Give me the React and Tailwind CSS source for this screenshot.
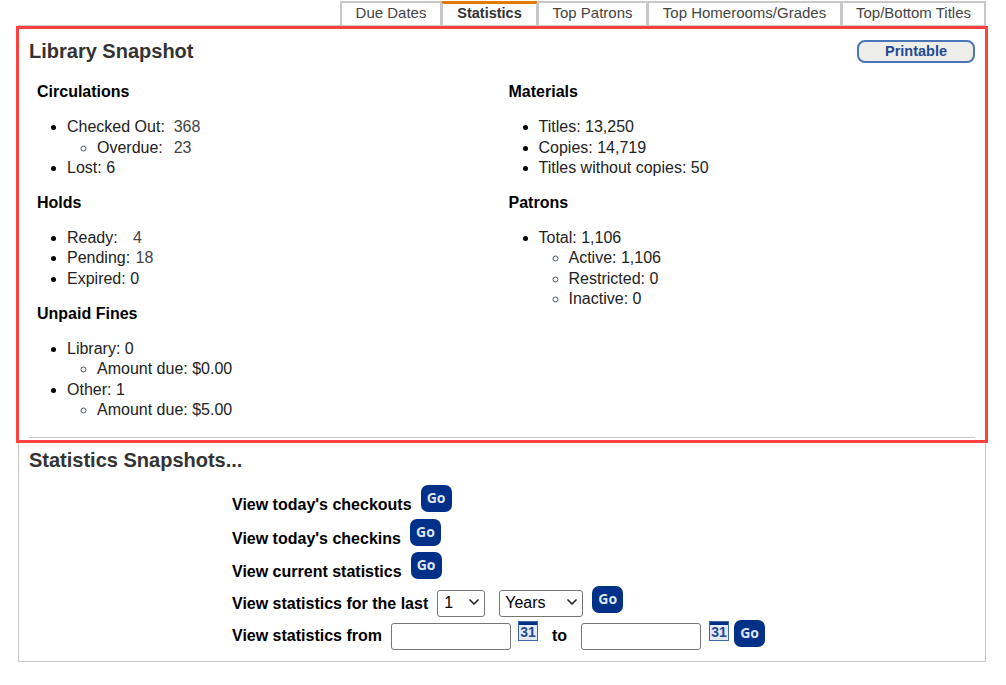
import React from "react";
import { ChevronDown } from "lucide-react";

const font = { fontFamily: '"Liberation Sans", Arial, sans-serif' };

const tabs = [
  { label: "Due Dates", w: "w-[102px]" },
  { label: "Statistics", w: "w-[97px]", active: true },
  { label: "Top Patrons", w: "w-[111px]" },
  { label: "Top Homerooms/Grades", w: "w-[195px]" },
  { label: "Top/Bottom Titles", w: "w-[145px]" },
];

const Section = ({ title, children }) => (
  <div className="mb-[14.55px]">
    <h3 className="mb-[14.55px] font-bold text-black">{title}</h3>
    <ul className="list-disc pl-[30px] marker:text-black">{children}</ul>
  </div>
);

const Sub = ({ children }) => (
  <ul className="list-[circle] pl-[30px] marker:text-gray-600">{children}</ul>
);

const Num = ({ className = "", children }) => <span className={`text-[#444] ${className}`}>{children}</span>;

const GoButton = ({ className = "" }) => (
  <button
    className={`flex h-[27px] w-[31px] items-center justify-center rounded-[7px] bg-[#003087] text-[14px] font-bold text-[#dfe6f2] ${className}`}
    style={{ fontFamily: '"Open Sans", sans-serif' }}
  >
    Go
  </button>
);

const CalendarIcon = ({ className = "" }) => (
  <div className={`flex h-[20px] w-[20px] flex-col overflow-hidden border border-[#3f66a8] bg-[#e3eaf6] ${className}`}>
    <div className="h-[3px] shrink-0 bg-[#003087]" />
    <div className="flex-1 text-center text-[14px] font-bold leading-[15px] text-[#1f4a92]">31</div>
  </div>
);

const fieldClass =
  "h-[27px] rounded-[3px] border border-[#767676] bg-white text-[16px] text-black";

const Select = ({ className = "", width, pad, value }) => (
  <div className={`relative ${className}`}>
    <select className={`h-[23px] appearance-none font-normal ${width} ${pad} ${fieldClass}`} defaultValue={value}>
      <option>{value}</option>
    </select>
    <ChevronDown size={16} strokeWidth={2.5} className="pointer-events-none absolute right-[3px] top-[4px] text-[#222]" />
  </div>
);

export default function App() {
  return (
    <div className="relative h-[685px] w-[1006px] overflow-hidden bg-white text-[16px] leading-[20.4px] text-[#222]" style={font}>
      <div className="flex h-[25px] justify-end pr-[20px] pt-[1px]">
        {tabs.map((t) => (
          <div
            key={t.label}
            className={`-ml-[1px] whitespace-nowrap border-2 border-b-0 border-[#c8c8c8] text-center leading-[19px] first:ml-0 ${t.w} ${
              t.active ? "border-t-[3px] border-t-[#e07b00] text-[14.5px] font-bold text-[#333]" : "text-[15px] text-[#444]"
            }`}
          >
            {t.label}
          </div>
        ))}
      </div>

      <div className="mx-[18px] h-[637px] w-[968px] border border-[#c8c8c8] pl-[10px] pr-[10px]">
        <div className="flex items-center justify-between pt-[13px]">
          <h2 className="text-[20px] font-bold leading-[25px] text-[#333]">Library Snapshot</h2>
          <button className="h-[23px] w-[118px] rounded-[8px] border-2 border-[#4a76b8] bg-[#edeee9] text-[14.5px] font-bold leading-[17px] text-[#1f4a92]">
            Printable
          </button>
        </div>

        <div className="flex pl-[8px] pt-[18.3px]">
          <div className="w-[471.5px]">
            <Section title="Circulations">
              <li>Checked Out:&nbsp; <Num>368</Num></li>
              <Sub><li>Overdue:&nbsp; <Num className="ml-[2px]">23</Num></li></Sub>
              <li>Lost: 6</li>
            </Section>
            <Section title="Holds">
              <li>Ready: &nbsp; <Num className="ml-[2px]">4</Num></li>
              <li>Pending: <Num className="ml-[1px]">18</Num></li>
              <li>Expired: 0</li>
            </Section>
            <Section title="Unpaid Fines">
              <li>Library: 0</li>
              <Sub><li>Amount due: $0.00</li></Sub>
              <li>Other: 1</li>
              <Sub><li>Amount due: $5.00</li></Sub>
            </Section>
          </div>
          <div>
            <Section title="Materials">
              <li>Titles: 13,250</li>
              <li>Copies: 14,719</li>
              <li>Titles without copies: 50</li>
            </Section>
            <Section title="Patrons">
              <li>Total: 1,106</li>
              <Sub>
                <li>Active: 1,106</li>
                <li>Restricted: 0</li>
                <li>Inactive: 0</li>
              </Sub>
            </Section>
          </div>
        </div>

        <hr className="mt-[1.7px] border-[#c8c8c8]" />

        <h2 className="mt-[10px] text-[20px] font-bold leading-[25px] text-[#333]">Statistics Snapshots...</h2>

        <div className="ml-[203px] mt-[12px] font-bold text-black">
          <div className="flex h-[34px] items-start">
            <span className="mt-[10px]">View today's checkouts</span>
            <GoButton className="ml-[9px]" />
          </div>
          <div className="flex h-[33px] items-start">
            <span className="mt-[10px]">View today's checkins</span>
            <GoButton className="ml-[9px]" />
          </div>
          <div className="flex h-[33px] items-start">
            <span className="mt-[10px]">View current statistics</span>
            <GoButton className="ml-[9px]" />
          </div>
          <div className="flex h-[35px] items-start">
            <span className="mt-[9px]">View statistics for the last</span>
            <Select className="ml-[9px] mt-[5px]" width="w-[48px]" pad="pl-[6px]" value="1" />
            <Select className="ml-[14px] mt-[5px]" width="w-[84px]" pad="pl-[5px]" value="Years" />
            <GoButton className="ml-[9px] mt-[1px]" />
          </div>
          <div className="flex items-start">
            <span className="mt-[6px]">View statistics from</span>
            <input className={`ml-[9px] mt-[3px] w-[120px] font-normal ${fieldClass}`} />
            <CalendarIcon className="ml-[7px] mt-[1px]" />
            <span className="ml-[14px] mt-[6px]">to</span>
            <input className={`ml-[14px] mt-[3px] w-[120px] font-normal ${fieldClass}`} />
            <CalendarIcon className="ml-[8px] mt-[1px]" />
            <GoButton className="ml-[5px]" />
          </div>
        </div>
      </div>

      {/* highlight box drawn over the page */}
      <div className="pointer-events-none absolute left-[16px] top-[26px] h-[417px] w-[972px] border-[3px] border-[#ff4040]" />
    </div>
  );
}
